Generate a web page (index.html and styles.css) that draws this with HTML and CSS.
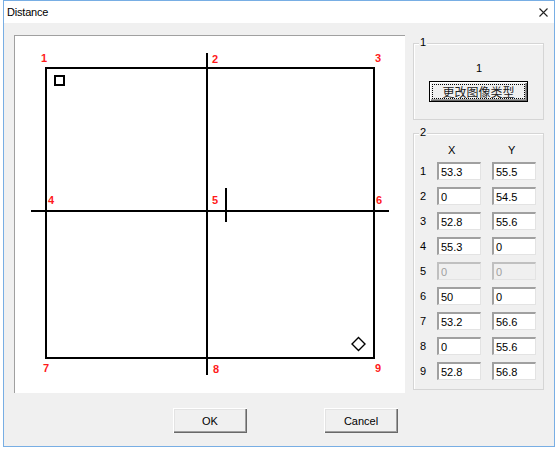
FILE: index.html
```html
<!DOCTYPE html>
<html lang="en">
<head>
    <meta charset="UTF-8">
    <title>Distance</title>
    <link rel="stylesheet" href="styles.css">
</head>
<body>
    <div class="window">
        <div class="titlebar">
            <span class="title">Distance</span>
            <svg class="close" width="9" height="9" viewBox="0 0 9 9">
                <path d="M0.5 0.5 L8.5 8.5 M8.5 0.5 L0.5 8.5" stroke="#222" stroke-width="1.1" fill="none"/>
            </svg>
        </div>
        <div class="client">
            <div class="content">
                <div class="canvas">
                    <svg width="390" height="357" viewBox="0 0 390 357">
                        <g stroke="#000" stroke-width="2" fill="none">
                            <rect x="31" y="32" width="328" height="290"/>
                            <line x1="192" y1="17" x2="192" y2="339"/>
                            <line x1="16" y1="175" x2="374" y2="175"/>
                            <line x1="211" y1="152" x2="211" y2="186"/>
                            <rect x="40" y="40" width="9" height="9"/>
                        </g>
                        <polygon points="343.5,301.5 350,308 343.5,314.5 337,308" stroke="#000" stroke-width="1.4" fill="none"/>
                        <g class="pt">
                            <text x="26" y="26">1</text>
                            <text x="197" y="27">2</text>
                            <text x="360" y="26">3</text>
                            <text x="33" y="168">4</text>
                            <text x="197" y="168">5</text>
                            <text x="361" y="168">6</text>
                            <text x="28" y="336">7</text>
                            <text x="198" y="337">8</text>
                            <text x="360" y="336">9</text>
                        </g>
                    </svg>
                </div>
                <div class="side">
                    <div class="group group-one">
                        <span class="group-title">1</span>
                        <div class="value">1</div>
                        <button class="btn default">更改图像类型</button>
                    </div>
                    <div class="group group-two">
                        <span class="group-title">2</span>
                        <div class="grid">
                            <span></span>
                            <span class="head head-x">X</span>
                            <span class="head head-y">Y</span>

                            <span class="num">1</span>
                            <input class="field" value="53.3">
                            <input class="field" value="55.5">

                            <span class="num">2</span>
                            <input class="field" value="0">
                            <input class="field" value="54.5">

                            <span class="num">3</span>
                            <input class="field" value="52.8">
                            <input class="field" value="55.6">

                            <span class="num">4</span>
                            <input class="field" value="55.3">
                            <input class="field" value="0">

                            <span class="num">5</span>
                            <input class="field" value="0" disabled>
                            <input class="field" value="0" disabled>

                            <span class="num">6</span>
                            <input class="field" value="50">
                            <input class="field" value="0">

                            <span class="num">7</span>
                            <input class="field" value="53.2">
                            <input class="field" value="56.6">

                            <span class="num">8</span>
                            <input class="field" value="0">
                            <input class="field" value="55.6">

                            <span class="num">9</span>
                            <input class="field" value="52.8">
                            <input class="field" value="56.8">
                        </div>
                    </div>
                </div>
            </div>
            <div class="actions">
                <button class="btn push">OK</button>
                <button class="btn push cancel">Cancel</button>
            </div>
        </div>
    </div>
</body>
</html>
```

FILE: styles.css
```css
body {
    margin: 0;
    background: #fff;
    font-family: 'Liberation Sans', Arial, sans-serif;
    font-size: 11px;
    color: #000;
}

.window {
    margin-left: 3px;
    width: 552px;
    height: 447px;
    box-sizing: border-box;
    border: 1px solid #78aee4;
    background: #f0f0f0;
}

.titlebar {
    height: 22px;
    background: #fff;
    display: flex;
    align-items: center;
    justify-content: space-between;
    padding: 0 6px 0 3px;
}

.title {
    font-size: 11px;
    letter-spacing: -0.2px;
}

.close {
    display: block;
    margin-top: 1px;
}

.client {
    padding: 12px 0 0 10px;
}

.content {
    display: flex;
    gap: 8px;
}

.canvas {
    width: 391px;
    height: 358px;
    box-sizing: border-box;
    background: #fff;
    border-top: 1px solid #a0a0a0;
    border-left: 1px solid #a0a0a0;
}

.canvas svg {
    display: block;
}

.pt text {
    font-family: 'Liberation Sans', Arial, sans-serif;
    font-size: 11px;
    font-weight: bold;
    fill: #ff1a1a;
}

.side {
    width: 131px;
    display: flex;
    flex-direction: column;
}

.group {
    position: relative;
    box-sizing: border-box;
    border: 1px solid #d5d5d5;
    box-shadow: inset 1px 1px #fff;
}

.group-title {
    position: absolute;
    top: -8px;
    left: 5px;
    padding: 0 1px;
    line-height: 13px;
    background: #f0f0f0;
}

.group-one {
    margin-top: 8px;
    height: 77px;
    display: flex;
    flex-direction: column;
    align-items: center;
    padding-top: 18px;
}

.value {
    line-height: 13px;
    padding-left: 1px;
}

.btn {
    font-family: 'Liberation Sans', Arial, sans-serif;
    font-size: 11px;
    color: #000;
    background: #f0f0f0;
    border: none;
    padding: 0;
    box-sizing: border-box;
}

.btn.default {
    margin-top: 6px;
    width: 99px;
    height: 21px;
    font-family: 'Noto Sans CJK SC', sans-serif;
    font-size: 12px;
    color: #222;
    border: 1px solid #000;
    box-shadow: inset 1px 1px #fff, inset -1px -1px #696969, inset -2px -2px #a0a0a0;
    outline: 1px dotted #000;
    outline-offset: -4px;
    line-height: 17px;
}

.group-two {
    margin-top: 13px;
    height: 257px;
}

.grid {
    display: grid;
    grid-template-columns: 12px 44px 44px;
    grid-template-rows: 21px repeat(9, 18px);
    column-gap: 11px;
    row-gap: 7px;
}

.head {
    align-self: end;
    line-height: 13px;
    margin-bottom: -2px;
}

.head-x {
    padding-left: 11px;
}

.head-y {
    padding-left: 16px;
}

.num {
    align-self: center;
    padding-left: 6px;
    line-height: 13px;
}

.field {
    width: 44px;
    height: 18px;
    box-sizing: border-box;
    margin: 0;
    padding: 0 0 0 2px;
    font-family: 'Liberation Sans', Arial, sans-serif;
    font-size: 11px;
    color: #000;
    background: #fff;
    border-top: 2px solid #a0a0a0;
    border-left: 2px solid #a0a0a0;
    border-right: 1px solid #e3e3e3;
    border-bottom: 1px solid #e3e3e3;
    outline: none;
}

.field:disabled {
    background: #f0f0f0;
    color: #a0a0a0;
    border-top-color: #c0c0c0;
    border-left-color: #c0c0c0;
}

.actions {
    display: flex;
    margin-top: 15px;
    padding-left: 159px;
}

.btn.push {
    width: 74px;
    height: 25px;
    box-shadow: inset 1px 1px #fff, inset -1px -1px #696969, inset -2px -2px #a0a0a0, inset 2px 2px #e3e3e3;
}

.btn.cancel {
    margin-left: 77px;
}
```
